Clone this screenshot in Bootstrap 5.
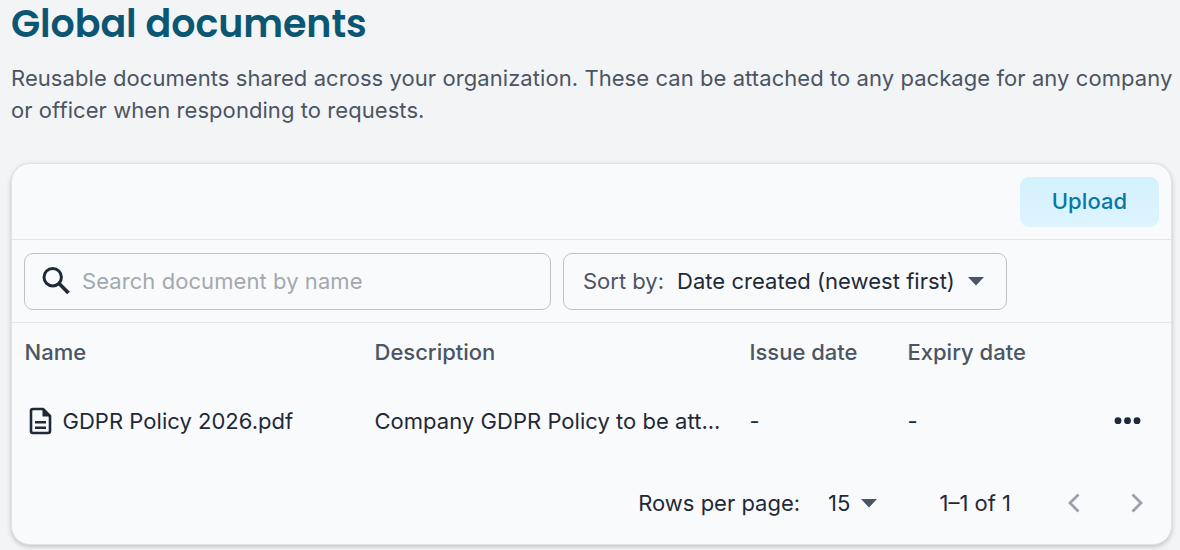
<!DOCTYPE html>
<html lang="en">
<head>
<meta charset="utf-8">
<meta name="viewport" content="width=device-width, initial-scale=1">
<title>Global documents</title>
<link href="https://cdn.jsdelivr.net/npm/bootstrap@5.3.0/dist/css/bootstrap.min.css" rel="stylesheet">
<style>
body{font-family:Inter,"Liberation Sans",sans-serif;background:#f3f4f6;color:#1f2937;font-size:22px;line-height:32px;overflow:hidden;height:550px}
.page{padding:0 8px 0 11px}
.title{font-family:Poppins,Inter,sans-serif;font-weight:600;font-size:38px;line-height:48px;color:#0b5773;letter-spacing:-.08px}
.intro{color:#4b5563;margin-top:14px;letter-spacing:.065px;white-space:nowrap}
.panel{margin-top:37px;height:382px;border:1px solid #e0e2e5;border-radius:19px;background:#f9fafc;box-shadow:0 2px 5px rgba(0,0,0,.2)}
.bar{border-bottom:1px solid #e3e5e8;padding:0 12px}
.bar-top{height:76px}
.bar-filter{height:83px;gap:12px}
.btn-upload{--bs-btn-color:#0878a4;--bs-btn-bg:#dbf3fe;--bs-btn-border-color:transparent;--bs-btn-font-weight:500;--bs-btn-font-size:22px;width:139px;height:50px;border:0;border-radius:9px;padding:0;letter-spacing:.1px;background-image:linear-gradient(#d3f1fd,#def4ff)}
.field{height:57px;border:1px solid #bfc1c5;border-radius:9px}
.search{width:527px;padding-left:16px}
.search input{background:none;border:0;outline:0;padding:0;margin-left:10px;width:440px;color:inherit;letter-spacing:.07px}
.search input::placeholder{color:#a5a8ae;opacity:1}
.sort{width:444px;padding-left:19px}
.sort-value{margin:0 13px;letter-spacing:.03px}
.muted{color:#4b5563}
.doc-grid{display:grid;grid-template-columns:350px 375px 158px 1fr auto;padding:0 29px 0 12.500px;align-items:center}
.doc-head{height:58px;color:#4b5563;font-weight:500}
.doc-row{height:80px;letter-spacing:.03px}
.doc-icon{margin:0 11px 0 4px}
.pager{height:84px;padding-right:27px}
.page-size{margin:0 11px 0 28px}
.page-range{margin:0 56px 0 62px}
svg{display:block;flex:none}
</style>
</head>
<body>
<main class="page">
  <h1 class="title m-0">Global documents</h1>
  <p class="intro mb-0">Reusable documents shared across your organization. These can be attached to any package for any company<br>or officer when responding to requests.</p>
  <section class="panel">
    <div class="bar bar-top d-flex align-items-center justify-content-end"><button class="btn btn-upload" type="button">Upload</button></div>
    <div class="bar bar-filter d-flex align-items-center">
      <label class="field search d-flex align-items-center">
        <svg width="31" height="31" viewBox="0 0 31 31" fill="none" stroke="#1f2937" stroke-width="3"><circle cx="11.7" cy="11.200" r="8.7"/><path d="M17.800 17.300l9.7 9.7" stroke-width="3.7"/></svg>
        <input type="text" placeholder="Search document by name">
      </label>
      <div class="field sort d-flex align-items-center" role="button">
        <span class="muted">Sort by:</span><span class="sort-value">Date created (newest first)</span>
        <svg width="16" height="9" viewBox="0 0 16 9"><path d="M0 0h16L8 8.5z" fill="#4b5563"/></svg>
      </div>
    </div>
    <div class="doc-grid doc-head"><span>Name</span><span>Description</span><span>Issue date</span><span>Expiry date</span></div>
    <div class="doc-grid doc-row">
      <div class="d-flex align-items-center">
        <svg class="doc-icon" width="23" height="28" viewBox="0 0 23 28"><path d="M4 2h10l7 7v15q0 2-2 2H4q-2 0-2-2V4q0-2 2-2z" fill="none" stroke="#1f2937" stroke-width="2.6" stroke-linejoin="round"/><path d="M13.5 2v7.5H21zM6 14h11v2.5H6zM6 19.500h11V22H6z" fill="#1f2937"/></svg>
        <span>GDPR Policy 2026.pdf</span>
      </div>
      <span>Company GDPR Policy to be att...</span><span>-</span><span>-</span>
      <svg width="28" height="8" viewBox="0 0 28 8" fill="#1f2937"><circle cx="4" cy="3.700" r="3.400"/><circle cx="13.500" cy="3.700" r="3.400"/><circle cx="23" cy="3.700" r="3.400"/></svg>
    </div>
    <div class="pager d-flex align-items-center justify-content-end">
      <span>Rows per page:</span><span class="page-size">15</span>
      <svg width="16" height="9" viewBox="0 0 16 9"><path d="M0 0h16L8 8.500z" fill="#4b5563"/></svg>
      <span class="page-range">1–1 of 1</span>
      <svg width="14" height="20" viewBox="0 0 14 20" fill="none" stroke="#9ca0aa" stroke-width="2.800"><path d="M11.500 1.500L3 10l8.500 8.500"/></svg>
      <svg style="margin-left:49px" width="14" height="20" viewBox="0 0 14 20" fill="none" stroke="#9ca0aa" stroke-width="2.800"><path d="M2.500 1.500L11 10l-8.500 8.500"/></svg>
    </div>
  </section>
</main>
<script src="https://cdn.jsdelivr.net/npm/bootstrap@5.3.0/dist/js/bootstrap.bundle.min.js"></script>
</body>
</html>
